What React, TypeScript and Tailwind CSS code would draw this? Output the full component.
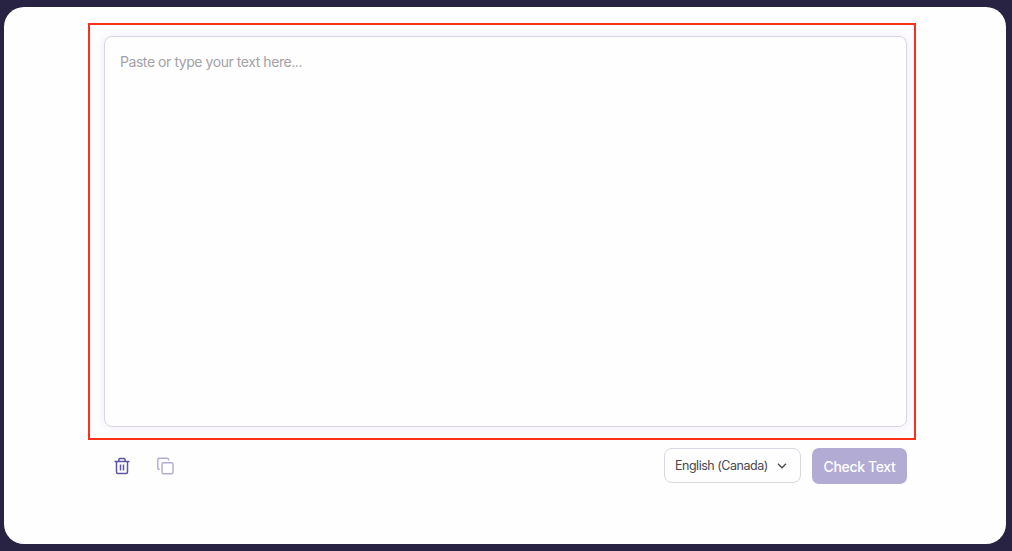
import React, { useRef, useState } from 'react';

const TrashIcon = () => (
  <svg width="16" height="18" viewBox="0 0 16 18" fill="none" stroke="currentColor" strokeWidth="1.5">
    <path d="M0.5 4.5H15.5" />
    <path d="M4.6 4.2L5.1 2.2Q5.3 1.5 6.1 1.5H9.9Q10.7 1.5 10.9 2.2L11.4 4.2" />
    <path d="M2.5 4.5V15Q2.5 16.5 4 16.5H12Q13.5 16.5 13.5 15V4.5" />
    <path d="M6.5 7.5V13.5M9.5 7.5V13.5" />
  </svg>
);

const CopyIcon = () => (
  <svg width="17" height="18" viewBox="0 0 17 18" fill="none" stroke="currentColor" strokeWidth="1.4">
    <rect x="5" y="5.7" width="11" height="11" rx="1.5" />
    <path d="M2.8 12.3H2.2Q0.8 12.3 0.8 10.9V2.6Q0.8 1.2 2.2 1.2H10.2Q11.6 1.2 11.6 2.6V3.4" />
  </svg>
);

export default function App() {
  const [text, setText] = useState('');
  const inputRef = useRef<HTMLTextAreaElement>(null);

  const handleClear = () => {
    setText('');
    inputRef.current?.focus();
  };

  const handleCopy = () => {
    navigator.clipboard?.writeText(text);
  };

  return (
    <div className="h-screen overflow-hidden bg-[#292343] pt-[7px] pr-1.5 pb-[7px] pl-1 font-['Inter',sans-serif]">
      <main className="h-full rounded-[20px] bg-[#fefefe] pt-4 pr-[90px] pl-[84px]">
        {/* Text area */}
        <div className="h-[417px] border-2 border-[#f9301a] bg-[#fefdff] pt-[11px] pr-[7px] pb-[11px] pl-[14px]">
          <textarea
            ref={inputRef}
            value={text}
            onChange={(e) => setText(e.target.value)}
            placeholder="Paste or type your text here..."
            className="block h-[391px] w-full resize-none rounded-lg border border-[#d9d7e0] bg-[#fefefe] px-[15px] py-[15px] text-[14px] leading-5 tracking-[-0.44px] text-[#444] shadow-[0_0_10px_rgba(90,60,150,0.09)] outline-none placeholder:text-[#a3a2a6]"
          />
        </div>

        {/* Toolbar */}
        <div className="mt-2 flex h-9 items-start justify-between pr-[9px] pl-[26px]">
          <div className="flex h-9 items-center gap-[27px]">
            <button type="button" aria-label="Clear" onClick={handleClear} className="text-[#5f55a5]">
              <TrashIcon />
            </button>
            <button type="button" aria-label="Copy" onClick={handleCopy} className="text-[#b1aad4]">
              <CopyIcon />
            </button>
          </div>

          <div className="flex items-start gap-[11px]">
            <button
              type="button"
              className="flex h-[35px] w-[137px] items-center justify-between rounded-lg border border-[#d9d7e0] bg-[#fefefe] pt-px pr-[13px] pl-2.5 text-[12.5px] tracking-[-0.48px] whitespace-nowrap text-[#49484d]"
            >
              English (Canada)
              <svg width="10" height="6" viewBox="0 0 10 6" fill="none" stroke="currentColor" strokeWidth="1.3">
                <path d="M1 0.8L5 4.8L9 0.8" />
              </svg>
            </button>
            <button
              type="button"
              className="h-9 w-[95px] rounded-[7px] bg-[#b2abd3] pt-px text-[14px] font-medium tracking-[-0.34px] whitespace-nowrap text-white"
            >
              Check Text
            </button>
          </div>
        </div>
      </main>
    </div>
  );
}
